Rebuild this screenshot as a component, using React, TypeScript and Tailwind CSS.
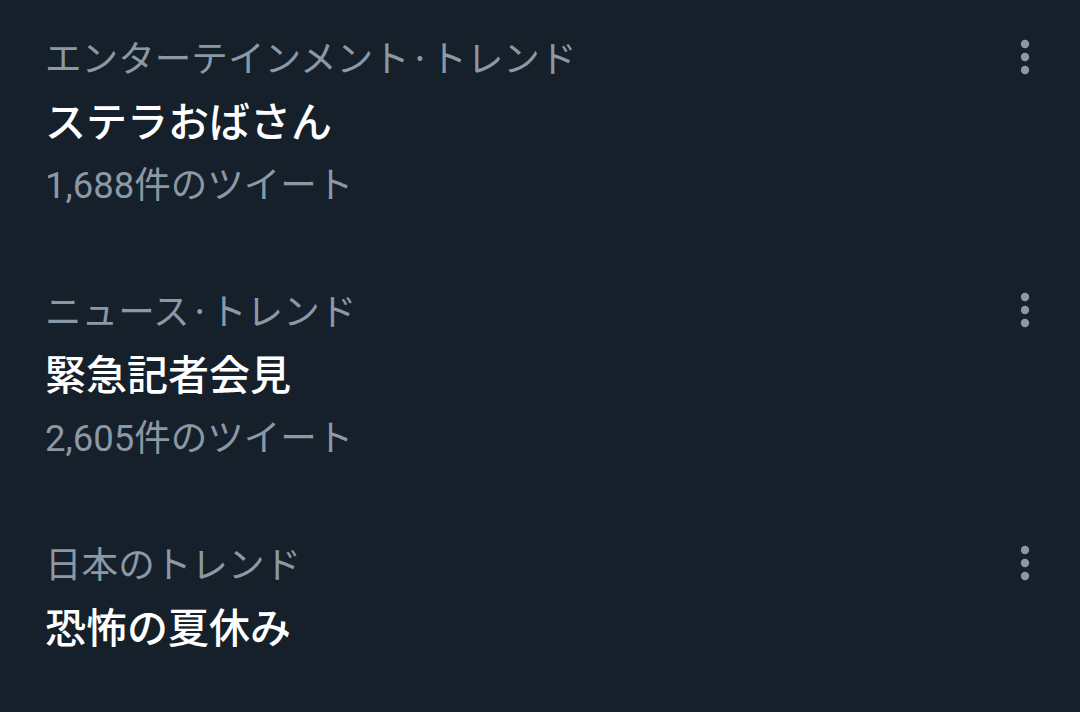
const trends = [
  { category: "エンターテインメント·トレンド", title: "ステラおばさん", count: "1,688件のツイート" },
  { category: "ニュース·トレンド", title: "緊急記者会見", count: "2,605件のツイート" },
  { category: "日本のトレンド", title: "恐怖の夏休み", count: "" },
];

const cjk = '"Noto Sans CJK JP", sans-serif';
const mixed = 'Roboto, "Noto Sans CJK JP", sans-serif';

function MoreIcon() {
  return (
    <svg width="16" height="40" viewBox="0 0 16 40" className="text-[#8b98a5]">
      <circle cx="8" cy="7" r="4.2" fill="currentColor" />
      <circle cx="8" cy="20" r="4.2" fill="currentColor" />
      <circle cx="8" cy="33" r="4.2" fill="currentColor" />
    </svg>
  );
}

export default function App() {
  return (
    <main className="w-[1080px] h-[712px] overflow-hidden bg-[#15202b]" style={{ fontFamily: cjk }}>
      {trends.map((t) => (
        <div key={t.title} className="flex justify-between pl-[45px] pr-[47px] pt-[25px] pb-[39px]">
          <div className="flex flex-col">
            <div className="text-[36.6px] leading-[63px] text-[#8b98a5]">{t.category}</div>
            <div className="text-[41px] leading-[63px] font-medium text-white">{t.title}</div>
            {t.count && (
              <div
                className="text-[36.5px] leading-[63px] pt-[3px] -mb-[3px] text-[#8b98a5]"
                style={{ fontFamily: mixed }}
              >
                {t.count}
              </div>
            )}
          </div>
          <div className="pt-[12px]">
            <MoreIcon />
          </div>
        </div>
      ))}
    </main>
  );
}
